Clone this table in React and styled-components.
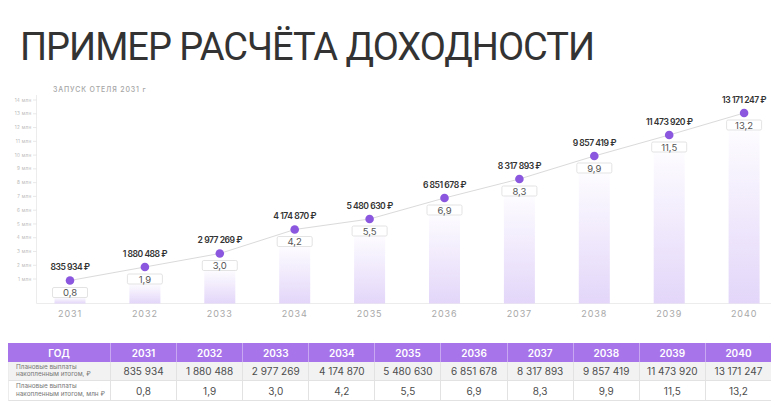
import React from "react";
import styled, { createGlobalStyle } from "styled-components";

const GlobalStyle = createGlobalStyle`
  html, body {
    margin: 0;
    padding: 0;
    background: #ffffff;
  }
  body {
    font-family: Inter, "Noto Sans", sans-serif;
  }
`;

const YEARS = [2031, 2032, 2033, 2034, 2035, 2036, 2037, 2038, 2039, 2040];

const DATA = [
  { year: 2031, amount: "835 934", mln: "0,8", y: 280.5 },
  { year: 2032, amount: "1 880 488", mln: "1,9", y: 267 },
  { year: 2033, amount: "2 977 269", mln: "3,0", y: 253.5 },
  { year: 2034, amount: "4 174 870", mln: "4,2", y: 229.5 },
  { year: 2035, amount: "5 480 630", mln: "5,5", y: 219 },
  { year: 2036, amount: "6 851 678", mln: "6,9", y: 198 },
  { year: 2037, amount: "8 317 893", mln: "8,3", y: 179 },
  { year: 2038, amount: "9 857 419", mln: "9,9", y: 156 },
  { year: 2039, amount: "11 473 920", mln: "11,5", y: 135 },
  { year: 2040, amount: "13 171 247", mln: "13,2", y: 113 },
];

const FIRST_X = 70;
const STEP = 74.9;
const BASE_Y = 303.5;
const colX = (i) => FIRST_X + i * STEP;

/**
 * Component declaration
 */
export default function App() {
  const points = DATA.map((d, i) => `${colX(i)},${d.y}`).join(" ");

  return (
    <Page>
      <GlobalStyle />
      <Title>ПРИМЕР РАСЧЁТА ДОХОДНОСТИ</Title>

      <Chart viewBox="0 82 782 240" width="782" height="240">
        <defs>
          <linearGradient id="bar" x1="0" y1="0" x2="0" y2="1">
            <stop offset="0" stopColor="#fdfcff" />
            <stop offset="1" stopColor="#e3d6f9" />
          </linearGradient>
        </defs>

        <CaptionText x="53" y="91.5">ЗАПУСК ОТЕЛЯ 2031 г</CaptionText>

        {/* y axis */}
        <line x1="36.5" y1="95" x2="36.5" y2={BASE_Y} stroke="#ececec" strokeWidth="1" />
        {Array.from({ length: 14 }, (_, k) => {
          const n = k + 1;
          const ty = 292.8 - n * 13.77;
          return (
            <g key={n}>
              <line x1="33" y1={ty} x2="36.5" y2={ty} stroke="#e2e2e2" strokeWidth="0.8" />
              <AxisText x="31.5" y={ty + 1.6} textAnchor="end">{n} млн</AxisText>
            </g>
          );
        })}
        <line x1="36.5" y1={BASE_Y} x2="771" y2={BASE_Y} stroke="#ececec" strokeWidth="1" />

        {/* bars */}
        {DATA.map((d, i) => {
          const top = d.y + 17;
          return (
            <rect
              key={d.year}
              x={colX(i) - 15.5}
              y={top}
              width="31"
              height={BASE_Y - top}
              fill="url(#bar)"
            />
          );
        })}

        {/* value boxes */}
        {DATA.map((d, i) => (
          <g key={d.year}>
            <rect
              x={colX(i) - 17.5}
              y={d.y + 7}
              width="35"
              height="10"
              rx="1.5"
              fill="#ffffff"
              stroke="#dcdcdc"
              strokeWidth="0.8"
            />
            <BoxText x={colX(i)} y={d.y + 15.6} textAnchor="middle">{d.mln}</BoxText>
          </g>
        ))}

        <polyline points={points} fill="none" stroke="#dadada" strokeWidth="1" />

        {DATA.map((d, i) => (
          <g key={d.year}>
            <circle cx={colX(i)} cy={d.y} r="4.3" fill="#8b57de" />
            <AmountText x={colX(i)} y={d.y - 10.3} textAnchor="middle">
              {d.amount} ₽
            </AmountText>
            <YearText x={colX(i)} y="316.5" textAnchor="middle">{d.year}</YearText>
          </g>
        ))}
      </Chart>

      <Table>
        <HeadCell first>ГОД</HeadCell>
        {YEARS.map((y) => (
          <HeadCell key={y}>{y}</HeadCell>
        ))}

        <LabelCell shaded>Плановые выплаты<br />накопленным итогом, ₽</LabelCell>
        {DATA.map((d) => (
          <ValueCell key={d.year} shaded>{d.amount}</ValueCell>
        ))}

        <LabelCell>Плановые выплаты<br />накопленным итогом, млн ₽</LabelCell>
        {DATA.map((d) => (
          <ValueCell key={d.year}>{d.mln}</ValueCell>
        ))}
      </Table>
    </Page>
  );
}

/**
 * Styled components declaration
 */
const Page = styled.div`
  width: 782px;
  height: 415px;
  padding-top: 25px;
  box-sizing: border-box;
  overflow: hidden;
  display: flex;
  flex-direction: column;
  align-items: flex-start;
`;

const Title = styled.h1`
  margin: 0 0 0 20px;
  font-family: Roboto, "Noto Sans", sans-serif;
  font-weight: 400;
  font-size: 38px;
  line-height: 44px;
  color: #333333;
  letter-spacing: -1px;
  white-space: nowrap;
`;

const Chart = styled.svg`
  display: block;
  flex: none;
  margin-top: 13px;
  font-family: Inter, "Noto Sans", sans-serif;
`;

const CaptionText = styled.text`
  font-size: 7px;
  font-weight: 500;
  letter-spacing: 0.85px;
  fill: #a6a6a6;
`;

const AxisText = styled.text`
  font-size: 4.6px;
  fill: #b8b8b8;
  letter-spacing: 0.3px;
`;

const BoxText = styled.text`
  font-size: 9.5px;
  fill: #555555;
`;

const AmountText = styled.text`
  font-size: 8.6px;
  font-weight: 600;
  fill: #333333;
  letter-spacing: -0.5px;
`;

const YearText = styled.text`
  font-size: 9px;
  fill: #a8a8a8;
  letter-spacing: 0.9px;
`;

const Table = styled.div`
  margin: 21px 0 0 8px;
  width: 763px;
  display: grid;
  grid-template-columns: 102px repeat(10, 1fr);
  grid-template-rows: 19px 19px 20px;
`;

const HeadCell = styled.div`
  background: #a874ea;
  color: #ffffff;
  font-size: 10px;
  font-weight: 600;
  display: flex;
  align-items: center;
  justify-content: center;
  border-left: ${(p) => (p.first ? "none" : "1px solid #c9a8f2")};
`;

const LabelCell = styled.div`
  background: ${(p) => (p.shaded ? "#f2f2f2" : "#ffffff")};
  color: #777777;
  font-size: 6.4px;
  line-height: 7.4px;
  padding-left: 7px;
  display: flex;
  align-items: center;
  border-bottom: 1px solid #e2e2e2;
  border-left: 1px solid #ececec;
`;

const ValueCell = styled.div`
  background: ${(p) => (p.shaded ? "#f2f2f2" : "#ffffff")};
  color: #4d4d4d;
  font-size: 10px;
  display: flex;
  align-items: center;
  justify-content: center;
  border-left: 1px solid #e2e2e2;
  border-bottom: 1px solid #e2e2e2;
`;
